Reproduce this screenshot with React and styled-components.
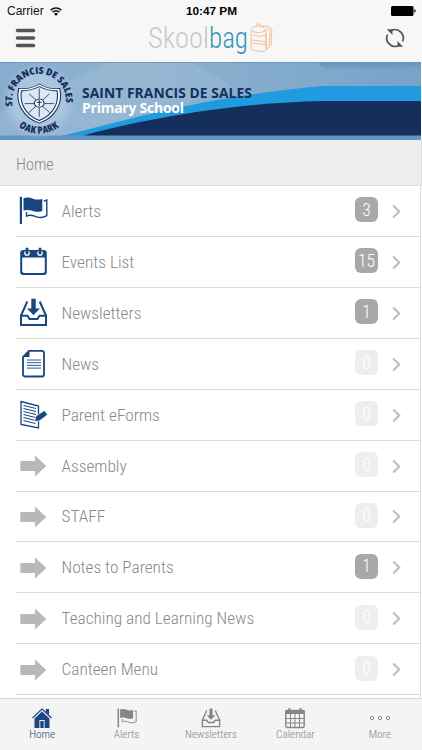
import React, { useState } from 'react';
import styled, { createGlobalStyle } from 'styled-components';

const GlobalStyles = createGlobalStyle`
  * {
    box-sizing: border-box;
    margin: 0;
    padding: 0;
  }
  body {
    background-color: #fff;
    font-family: 'Roboto Condensed', Roboto, sans-serif;
    font-stretch: 75%;
    font-weight: 300;
    overflow: hidden;
  }
  svg {
    display: block;
    flex-shrink: 0;
    overflow: visible;
  }
`;

const AppStyles = styled.div`
  width: 422px;
  height: 750px;
  display: flex;
  flex-direction: column;
  overflow: hidden;
  background-color: #fff;
`;

const StatusBar = styled.div`
  height: 20px;
  padding: 2px 6px 0 7px;
  display: grid;
  grid-template-columns: 1fr auto 1fr;
  align-items: center;
  background-color: #f7f7f7;
  font-family: 'Liberation Sans', sans-serif;
  font-stretch: normal;
  font-weight: 400;
  font-size: 12px;
  line-height: 16px;
  color: #111;
  .carrier {
    display: flex;
    align-items: center;
    gap: 6px;
  }
  .time {
    font-weight: 700;
    font-size: 11.8px;
    color: #000;
  }
  .battery {
    justify-self: end;
  }
`;

const NavBar = styled.header`
  height: 42px;
  padding: 0 17px 7px 15px;
  display: flex;
  align-items: center;
  justify-content: space-between;
  background-color: #f7f7f7;
`;

const IconButton = styled.button`
  border: 0;
  background: none;
  cursor: pointer;
`;

const Banner = styled.div`
  position: relative;
  height: 78px;
  flex-shrink: 0;
  padding: 22px 0 0 82px;
  .art {
    position: absolute;
    top: 0;
    left: 0;
  }
`;

const SchoolLine = styled.p`
  position: relative;
  width: fit-content;
  font-family: 'Open Sans', 'Noto Sans', sans-serif;
  font-stretch: normal;
  font-weight: 700;
  font-size: ${({ $light }) => ($light ? '14px' : '13.8px')};
  line-height: ${({ $light }) => ($light ? '14px' : '17px')};
  letter-spacing: ${({ $light }) => ($light ? '-0.25px' : '0.08px')};
  white-space: nowrap;
  color: ${({ $light }) => ($light ? '#fff' : '#14305f')};
`;

const Crumb = styled.div`
  height: 46px;
  flex-shrink: 0;
  padding: 3px 16px 0;
  display: flex;
  align-items: center;
  background-color: #eee;
  border-bottom: 1px solid #dedede;
  border-right: 1px solid #ddd;
  font-size: 16.2px;
  color: #888;
`;

const List = styled.ul`
  flex: 1;
  min-height: 0;
  overflow: hidden;
  margin-right: 1px;
  border-right: 1px solid #ddd;
  padding-left: 16px;
  list-style: none;
`;

const Row = styled.li`
  height: 50.93px;
  padding: 0 19px 0 3px;
  display: flex;
  align-items: center;
  border-bottom: 1px solid #dcdcdc;
  cursor: pointer;
  .icon {
    width: 29px;
    margin-right: 13.5px;
    color: #174680;
  }
  .label {
    flex: 1;
    font-size: 17.25px;
    line-height: 24px;
    color: #888;
  }
`;

const Badge = styled.span`
  width: 23px;
  height: 25px;
  margin: 0 14px 2px 0;
  border-radius: 6px;
  display: flex;
  align-items: center;
  justify-content: center;
  background-color: ${({ $empty }) => ($empty ? '#eee' : '#a8a8a8')};
  font-size: 17.5px;
  color: #fff;
`;

const TabBar = styled.nav`
  height: 52px;
  flex-shrink: 0;
  display: grid;
  grid-template-columns: repeat(5, 84.4px);
  background-color: #f4f4f4;
  border-top: 1px solid #d8d8d8;
`;

const Tab = styled.button`
  border: 0;
  background: none;
  padding-top: 9px;
  display: flex;
  flex-direction: column;
  align-items: center;
  cursor: pointer;
  font: inherit;
  font-stretch: inherit;
  font-size: 11.2px;
  line-height: 14px;
  color: ${({ $active }) => ($active ? '#1a4880' : '#858585')};
`;

function FlagIcon({ size = 29 }) {
  return (
    <svg width={size} height={size} viewBox="0 0 29 29">
      <path d="M.8 .8h2.200v27.200H.8z" fill="currentColor" />
      <path
        d="M4.500 2.300c3-1 6-1 9.500.4 3.500 1.300 6 .8 9.300.2v12c-3.300 1.300-6 1.200-9.300 0-3.500-1.200-6.500-1.300-9.500-.3z"
        fill="currentColor"
      />
      <path
        d="M24.800 5.200l3-1.200v15.700c-3.800 2.300-7.300 2.300-11 .9-4-1.600-6.500-1.800-9.300-.6v-4"
        fill="none"
        stroke="currentColor"
        strokeWidth="1.400"
      />
    </svg>
  );
}

function EventsIcon() {
  return (
    <svg width="29" height="29" viewBox="0 0 29 29">
      <path
        fillRule="evenodd"
        fill="currentColor"
        d="M4.200 3h20.600a3 3 0 0 1 3 3v19a3 3 0 0 1-3 3H4.200a3 3 0 0 1-3-3V6a3 3 0 0 1 3-3zM3.200 10.500v13.500a2 2 0 0 0 2 2h18.600a2 2 0 0 0 2-2V10.500z"
      />
      {[8, 21].map((x) => (
        <g key={x}>
          <circle cx={x} cy="6.300" r="2.800" fill="#fff" />
          <rect x={x - 1.5} y="0.500" width="3" height="7" rx="1.500" fill="currentColor" />
        </g>
      ))}
    </svg>
  );
}

function InboxIcon({ size = 29 }) {
  return (
    <svg width={size} height={size} viewBox="0 0 29 29">
      <g fill="none" stroke="currentColor" strokeWidth="2">
        <path d="M2 17.800V27h25v-9.200h-6.500l-2 3.200h-8l-2-3.200z" />
        <path d="M1.800 18L8.300 3.500M27.200 18L20.700 3.500" />
      </g>
      <path d="M12.300 .8h4.400v9.700h4.300L14.500 17 8 10.500h4.300z" fill="currentColor" />
    </svg>
  );
}

function NewsIcon() {
  return (
    <svg width="29" height="29" viewBox="0 0 29 29">
      <path
        d="M10 1.800h13a2 2 0 0 1 2 2v21.700a2 2 0 0 1-2 2H6a2 2 0 0 1-2-2V8z"
        fill="none"
        stroke="currentColor"
        strokeWidth="1.800"
      />
      <path d="M10.500 1.500V8H4z" fill="currentColor" />
      <path d="M8 11h14M8 13.700h14M8 16.400h14M8 19.100h14" stroke="currentColor" strokeWidth="0.900" />
    </svg>
  );
}

function FormIcon() {
  return (
    <svg width="29" height="29" viewBox="0 0 29 29">
      <path
        d="M2 1.500l17.500 4.500v22L2 24.500z"
        fill="none"
        stroke="currentColor"
        strokeWidth="1.300"
      />
      <path
        d="M4.500 5.500l12.500 3M4.500 8.500l12.500 3M4.500 11.500l12.500 3M4.500 14.500l12 3M4.500 17.500l11 2.700M4.500 20.500l12 3"
        stroke="currentColor"
      />
      <path
        d="M15.500 21.500l1.500-5.500 8.500-5.500 3 4.300-8 6z"
        fill="currentColor"
        stroke="#fff"
        strokeWidth="0.600"
      />
    </svg>
  );
}

function ArrowIcon() {
  return (
    <svg width="29" height="29" viewBox="0 0 29 29">
      <path d="M1.300 10H16V4.500L27.300 15 16 25.500V20H1.300z" fill="#b8b8b8" />
    </svg>
  );
}

function HomeIcon() {
  return (
    <svg width="20" height="20" viewBox="0 0 20 20">
      <path d="M10 3.500l7.500 7V20H12.600v-8H7.400v8H2.500v-9.500z" fill="currentColor" />
      <path d="M8.300 13h3.400v7H8.300z" fill="currentColor" />
      <path d="M13.800 1H17v6l-3.200-3z" fill="currentColor" />
      <path d="M.5 10L10 1l9.500 9" fill="none" stroke="currentColor" strokeWidth="1.200" />
    </svg>
  );
}

function CalendarIcon() {
  return (
    <svg width="20" height="20" viewBox="0 0 20 20">
      <rect x="0.800" y="2.500" width="18.400" height="17" rx="1.500" fill="none" stroke="currentColor" strokeWidth="1.400" />
      <path d="M.5 2h19v4H.5z" fill="currentColor" />
      <path d="M3.500 0h2v3h-2zM14.500 0h2v3h-2z" fill="currentColor" />
      <path d="M1 10.500h18M1 15h18M5.500 6v13M10 6v13M14.500 6v13" stroke="currentColor" />
    </svg>
  );
}

function MoreIcon() {
  return (
    <svg width="20" height="20" viewBox="0 0 20 20">
      {[2, 10, 18].map((x) => (
        <circle key={x} cx={x} cy="10" r="1.700" fill="none" stroke="currentColor" strokeWidth="0.900" />
      ))}
    </svg>
  );
}

function Chevron() {
  return (
    <svg width="9" height="14" viewBox="0 0 9 14">
      <path d="M1.200 1.500l6 6-6 6" fill="none" stroke="#c0c0c0" strokeWidth="2.200" />
    </svg>
  );
}

function Logo() {
  return (
    <svg width="126" height="34" viewBox="0 0 126 34">
      <g fontFamily="Roboto, sans-serif" fontSize="29.500">
        <text x="0" y="26.500" fontWeight="300" fill="#c8c8c8" textLength="61" lengthAdjust="spacingAndGlyphs">
          Skool
        </text>
        <text x="61" y="26.500" fontWeight="350" fill="#3195b9" textLength="39" lengthAdjust="spacingAndGlyphs">
          bag
        </text>
      </g>
      <g fill="none" stroke="#f0b78a" strokeWidth="0.900" transform="translate(0 1)">
        <path d="M103 11c0-5 3-7 7.500-7s7.500 2 7.500 7v17c0 1-1 1.500-2 1.500l-11-1c-1 0-2-.5-2-1.500z" />
        <path d="M108 4c0-3 5-3 5 0M103.500 9c4 2 10 2 14 0M105 13c4 1.500 8 1.500 12 .5M103.500 18l14 1.500M103.500 21l14 1.500" />
        <path d="M114 4.500c5-1.500 10 .5 10 5.500l-1 5c1.500 4 .5 8-2 10.500l-3.500 2M119 7c3 0 3.500 2 3 5l-1 12M118 12v14" />
      </g>
    </svg>
  );
}

function BannerArt() {
  return (
    <svg className="art" width="421" height="78" viewBox="0 0 421 78">
      <defs>
        <linearGradient id="sky" x1="0" x2="1">
          <stop offset="0" stopColor="#86acce" />
          <stop offset="0.300" stopColor="#8fb3d0" />
          <stop offset="1" stopColor="#78a3c7" />
        </linearGradient>
        <linearGradient id="shade" x1="0" x2="0" y1="0" y2="1">
          <stop offset="0" stopColor="#5f93be" />
          <stop offset="1" stopColor="#78a3c7" />
        </linearGradient>
        <radialGradient id="glow">
          <stop offset="0.650" stopColor="#a9c6df" />
          <stop offset="1" stopColor="#a9c6df" stopOpacity="0" />
        </radialGradient>
        <path id="arcTop" d="M12.500 44A27 27 0 1 1 65.500 44" />
        <path id="arcBottom" d="M8 50A33 33 0 0 0 70 50" />
      </defs>
      <path d="M0 0h421v78H0z" fill="url(#sky)" />
      <path d="M0 50L110 0h82l44 27L62 74H0z" fill="#a3c0d7" opacity="0.350" />
      <path d="M317 0h104v7h-96z" fill="url(#shade)" />
      <path d="M62 74C120 60 200 35 322 24H421V74z" fill="#219be0" />
      <path d="M82 74C140 58 230 41 322 39H421V74z" fill="#142f5b" />
      <path d="M0 73.500h421V78H0z" fill="#6496c1" />
      <path d="M0 0h421v1H0z" fill="#6b9cc4" />
      <circle cx="39" cy="39" r="38" fill="url(#glow)" />
      <g fill="#17305f" fontFamily="Open Sans, sans-serif" fontWeight="800" fontSize="9.500">
        <text textLength="92" lengthAdjust="spacingAndGlyphs">
          <textPath href="#arcTop">ST. FRANCIS DE SALES</textPath>
        </text>
        <text fontSize="10" letterSpacing="0.300">
          <textPath href="#arcBottom" startOffset="50%" textAnchor="middle">OAK PARK</textPath>
        </text>
      </g>
      <g fill="#fff" stroke="#17305f" transform="translate(-3.400 3.300) scale(1.080 0.890)">
        <path d="M39.500 21c5 4 11 6 19 5 3 15-3 32-19 39-16-7-22-24-19-39 8 1 14-1 19-5z" />
        <path
          d="M39.500 24c5 3 10 5 16.500 4.500 2 13-3 27-16.500 33.500C26 55.500 21 41.500 23 28.500c6.500.5 11.500-1.500 16.500-4.500z"
          fill="#dbe7f2"
        />
        <path d="M39.500 26v32M26 43h27M30 32l19 21M49 32L30 53" strokeWidth="0.800" />
        <circle cx="39.500" cy="42.500" r="4.500" />
        <path d="M39.500 39v7M37 41.500h5" />
      </g>
    </svg>
  );
}

const rows = [
  { id: 1, label: 'Alerts', count: 3, icon: FlagIcon },
  { id: 2, label: 'Events List', count: 15, icon: EventsIcon },
  { id: 3, label: 'Newsletters', count: 1, icon: InboxIcon },
  { id: 4, label: 'News', count: 0, icon: NewsIcon },
  { id: 5, label: 'Parent eForms', count: 0, icon: FormIcon },
  { id: 6, label: 'Assembly', count: 0, icon: ArrowIcon },
  { id: 7, label: 'STAFF', count: 0, icon: ArrowIcon },
  { id: 8, label: 'Notes to Parents', count: 1, icon: ArrowIcon },
  { id: 9, label: 'Teaching and Learning News', count: 0, icon: ArrowIcon },
  { id: 10, label: 'Canteen Menu', count: 0, icon: ArrowIcon },
];

const tabs = [
  { label: 'Home', icon: HomeIcon },
  { label: 'Alerts', icon: FlagIcon },
  { label: 'Newsletters', icon: InboxIcon },
  { label: 'Calendar', icon: CalendarIcon },
  { label: 'More', icon: MoreIcon },
];

function App() {
  const [activeTab, setActiveTab] = useState('Home');
  return (
    <AppStyles>
      <GlobalStyles />
      <StatusBar>
        <div className="carrier">
          Carrier
          <svg width="12" height="9" viewBox="0 0 12 9">
            <g fill="none" stroke="#111" strokeWidth="1.500">
              <path d="M.6 3.200a7.700 7.700 0 0 1 10.800 0M2.500 5.300a5 5 0 0 1 7 0" />
            </g>
            <path d="M4 6.800a2.900 2.900 0 0 1 4 0L6 9z" fill="#111" />
          </svg>
        </div>
        <span className="time">10:47 PM</span>
        <svg className="battery" width="25" height="10" viewBox="0 0 25 10">
          <rect width="22.500" height="10" rx="1.500" />
          <path d="M23.300 3.300q1.400.3 1.400 1.700t-1.400 1.700z" />
        </svg>
      </StatusBar>
      <NavBar>
        <IconButton aria-label="Menu">
          <svg width="21" height="20" viewBox="0 0 21 20">
            <path d="M2.500 2.500h16M2.500 10h16M2.500 17.500h16" stroke="#555" strokeWidth="3.600" strokeLinecap="round" />
          </svg>
        </IconButton>
        <Logo />
        <IconButton aria-label="Refresh">
          <svg width="20" height="20" viewBox="0 0 20 20">
            <g fill="none" stroke="#555" strokeWidth="1.700">
              <path d="M7 2.100A8.400 8.400 0 0 1 17.500 13.500M13 17.900A8.400 8.400 0 0 1 2.500 6.500" />
            </g>
            <path d="M1.800 1.200h5.700v5.700zM18.200 18.800h-5.700v-5.700z" fill="#555" />
          </svg>
        </IconButton>
      </NavBar>
      <Banner>
        <BannerArt />
        <SchoolLine>SAINT FRANCIS DE SALES</SchoolLine>
        <SchoolLine $light>Primary School</SchoolLine>
      </Banner>
      <Crumb>Home</Crumb>
      <List>
        {rows.map(({ id, label, count, icon: Icon }) => (
          <Row key={id}>
            <div className="icon">
              <Icon />
            </div>
            <span className="label">{label}</span>
            <Badge $empty={count === 0}>{count}</Badge>
            <Chevron />
          </Row>
        ))}
      </List>
      <TabBar>
        {tabs.map(({ label, icon: Icon }) => (
          <Tab
            key={label}
            $active={label === activeTab}
            onClick={() => setActiveTab(label)}
          >
            <Icon size={20} />
            {label}
          </Tab>
        ))}
      </TabBar>
    </AppStyles>
  );
}

export default App;
